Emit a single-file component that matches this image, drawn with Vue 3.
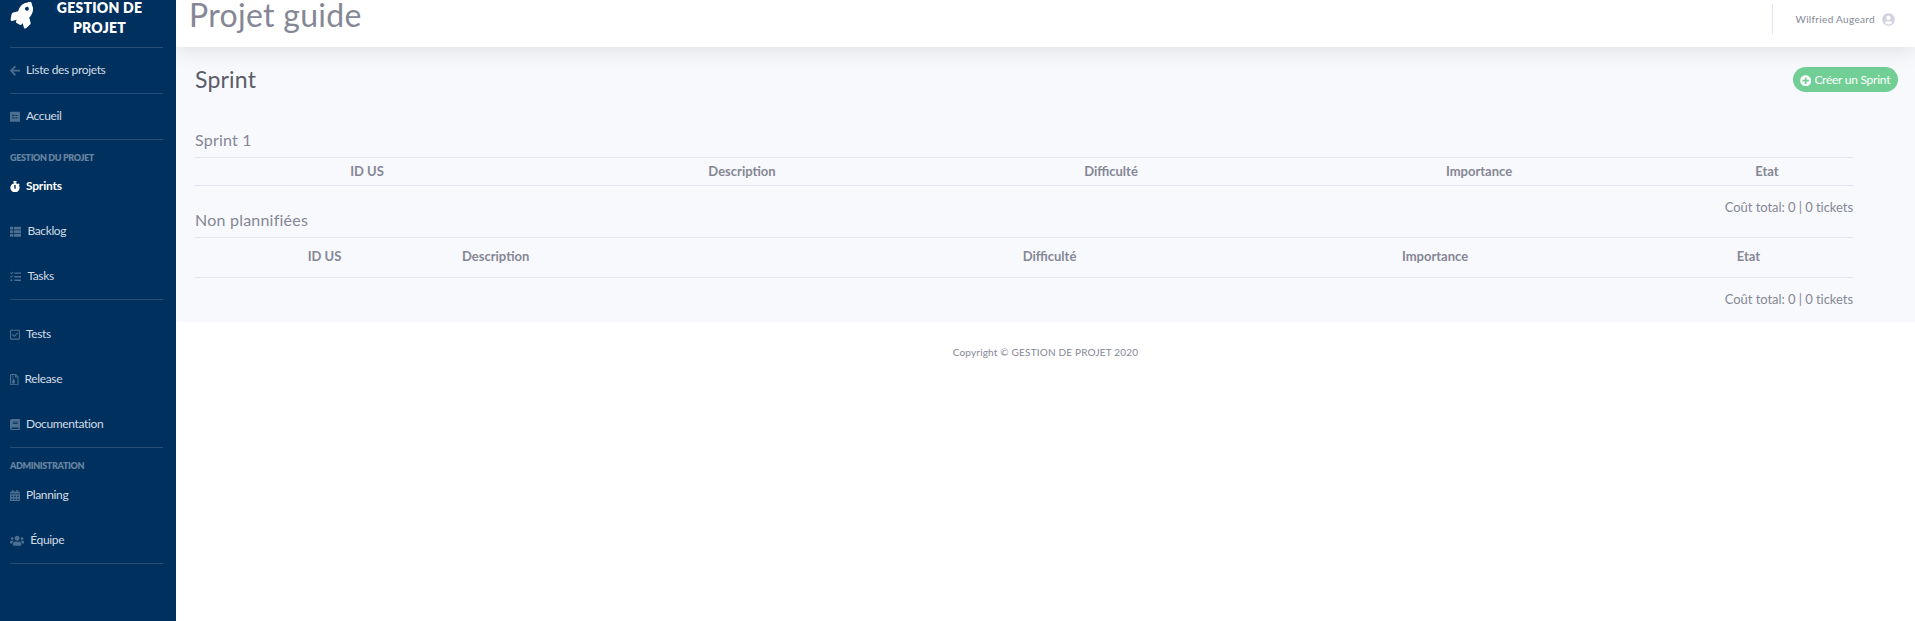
<script setup>
const icons = {
  arrow: { w: 448, d: 'M257.5 445.1l-22.2 22.2c-9.4 9.4-24.6 9.4-33.9 0L7 273c-9.4-9.4-9.4-24.6 0-33.9L201.4 44.7c9.4-9.4 24.6-9.4 33.9 0l22.2 22.2c9.5 9.5 9.3 25-.4 34.3L136.6 216H424c13.3 0 24 10.7 24 24v32c0 13.3-10.7 24-24 24H136.6l120.5 114.8c9.8 9.3 10 24.8.4 34.3z' },
  poll: { w: 448, d: 'M20 32h408a20 20 0 0 1 20 20v408a20 20 0 0 1-20 20H20a20 20 0 0 1-20-20V52a20 20 0 0 1 20-20zM100 170v60h90v-60zm120 20v30h130v-30zM100 282v60h90v-60zm120 10v30h130v-30z' },
  stopwatch: { w: 448, d: 'M432 304c0 114.9-93.100 208-208 208S16 418.900 16 304c0-104 76.300-190.200 176-205.500V64h-28c-6.600 0-12-5.400-12-12V12c0-6.600 5.400-12 12-12h120c6.600 0 12 5.400 12 12v40c0 6.600-5.400 12-12 12h-28v34.500c37.500 5.800 71.700 21.600 99.700 44.600l27.500-27.500c4.700-4.700 12.300-4.700 17 0l28.300 28.300c4.700 4.700 4.700 12.300 0 17l-29.400 29.400C419.600 227.100 432 264.100 432 304zm-176 36V188.500c0-6.600-5.400-12-12-12h-40c-6.600 0-12 5.400-12 12V340c0 6.600 5.400 12 12 12h40c6.600 0 12-5.400 12-12z' },
  list: { w: 512, d: 'M24 32h101a24 24 0 0 1 24 24v80a24 24 0 0 1-24 24H24a24 24 0 0 1-24-24V56a24 24 0 0 1 24-24zM205 32h283a24 24 0 0 1 24 24v80a24 24 0 0 1-24 24H205a24 24 0 0 1-24-24V56a24 24 0 0 1 24-24zM24 192h101a24 24 0 0 1 24 24v80a24 24 0 0 1-24 24H24a24 24 0 0 1-24-24v-80a24 24 0 0 1 24-24zM205 192h283a24 24 0 0 1 24 24v80a24 24 0 0 1-24 24H205a24 24 0 0 1-24-24v-80a24 24 0 0 1 24-24zM24 352h101a24 24 0 0 1 24 24v80a24 24 0 0 1-24 24H24a24 24 0 0 1-24-24v-80a24 24 0 0 1 24-24zM205 352h283a24 24 0 0 1 24 24v80a24 24 0 0 1-24 24H205a24 24 0 0 1-24-24v-80a24 24 0 0 1 24-24z' },
  tasks: { w: 512, d: 'M0 92l28-28 32 30 68-68 28 28-96 98zM0 252l28-28 32 30 68-68 28 28-96 98zM64 368a48 48 0 1 1-.1 96 48 48 0 0 1 .1-96zM208 64h288a16 16 0 0 1 16 16v32a16 16 0 0 1-16 16H208a16 16 0 0 1-16-16V80a16 16 0 0 1 16-16zM208 224h288a16 16 0 0 1 16 16v32a16 16 0 0 1-16 16H208a16 16 0 0 1-16-16v-32a16 16 0 0 1 16-16zM208 384h288a16 16 0 0 1 16 16v32a16 16 0 0 1-16 16H208a16 16 0 0 1-16-16v-32a16 16 0 0 1 16-16z' },
  check: { w: 448, d: 'M400 32H48C21.500 32 0 53.500 0 80v352c0 26.500 21.500 48 48 48h352c26.500 0 48-21.500 48-48V80c0-26.500-21.500-48-48-48zm0 400H48V80h352v352zM364 192L191 364 83 256l34-34 74 74 139-138z' },
  archive: { w: 384, d: 'M48 0h204c12.700 0 24.900 5.100 33.900 14.100L369.900 98c9 9 14.100 21.300 14.100 34v332a48 48 0 0 1-48 48H48a48 48 0 0 1-48-48V48A48 48 0 0 1 48 0zM48 48v416h288V160H248a24 24 0 0 1-24-24V48zM272 52v60h60zM96 48h32v32H96zM128 80h32v32h-32zM96 112h32v32H96zM128 144h32v32h-32zM96 176h32v32H96zM128 208h32v32h40l20 118a64 64 0 1 1-126 0l14-86h20z' },
  book: { w: 448, d: 'M448 360V24c0-13.300-10.700-24-24-24H96C43 0 0 43 0 96v320c0 53 43 96 96 96h328c13.300 0 24-10.700 24-24v-16c0-7.500-3.500-14.300-8.900-18.700-4.200-15.400-4.200-59.300 0-74.700 5.400-4.300 8.900-11.100 8.900-18.600zM128 134c0-3.300 2.700-6 6-6h212c3.300 0 6 2.700 6 6v20c0 3.300-2.700 6-6 6H134c-3.300 0-6-2.700-6-6v-20zm0 64c0-3.300 2.700-6 6-6h212c3.300 0 6 2.700 6 6v20c0 3.300-2.700 6-6 6H134c-3.300 0-6-2.700-6-6v-20zm253.400 250H96c-17.700 0-32-14.300-32-32s14.300-32 32-32h285.400c-1.900 17.100-1.900 46.900 0 64z' },
  calendar: { w: 448, d: 'M0 464a48 48 0 0 0 48 48h352a48 48 0 0 0 48-48V192H0zM0 160v-48a48 48 0 0 1 48-48h48V12a12 12 0 0 1 12-12h40a12 12 0 0 1 12 12v52h128V12a12 12 0 0 1 12-12h40a12 12 0 0 1 12 12v52h48a48 48 0 0 1 48 48v48zM64 256v64h64v-64zm128 0v64h64v-64zm128 0v64h64v-64zM64 384v64h64v-64zm128 0v64h64v-64zm128 0v64h64v-64z' },
  users: { w: 640, d: 'M96 224c35.300 0 64-28.700 64-64s-28.700-64-64-64-64 28.700-64 64 28.700 64 64 64zm448 0c35.300 0 64-28.700 64-64s-28.700-64-64-64-64 28.700-64 64 28.700 64 64 64zm32 32h-64c-17.600 0-33.500 7.100-45.100 18.600 40.300 22.100 68.900 62 75.100 109.400h66c17.700 0 32-14.300 32-32v-32c0-35.300-28.700-64-64-64zm-256 0c61.900 0 112-50.100 112-112S381.900 32 320 32 208 82.100 208 144s50.100 112 112 112zm76.800 32h-8.300c-20.800 10-43.900 16-68.500 16s-47.600-6-68.500-16h-8.300C179.600 288 128 339.600 128 403.200V432c0 26.500 21.500 48 48 48h288c26.500 0 48-21.500 48-48v-28.800c0-63.600-51.600-115.200-115.200-115.200zm-223.700-13.400C161.500 263.100 145.600 256 128 256H64c-35.300 0-64 28.700-64 64v32c0 17.700 14.300 32 32 32h65.900c6.300-47.400 34.900-87.300 75.200-109.400z' },
}

const groups = [
  { items: [{ icon: 'arrow', label: 'Liste des projets' }] },
  { items: [{ icon: 'poll', label: 'Accueil' }] },
  {
    title: 'Gestion du projet',
    items: [
      { icon: 'stopwatch', label: 'Sprints', active: true },
      { icon: 'list', label: 'Backlog' },
      { icon: 'tasks', label: 'Tasks' },
    ],
  },
  {
    spaced: true,
    items: [
      { icon: 'check', label: 'Tests' },
      { icon: 'archive', label: 'Release' },
      { icon: 'book', label: 'Documentation' },
    ],
  },
  {
    title: 'Administration',
    items: [
      { icon: 'calendar', label: 'Planning' },
      { icon: 'users', label: 'Équipe' },
    ],
  },
]

const columns = ['ID US', 'Description', 'Difficulté', 'Importance', 'Etat']
</script>

<template>
  <div class="layout">
    <aside class="sidebar">
      <div class="brand">
        <svg class="rocket" viewBox="0 0 512 512"><path d="M505.120 19.094c-1.189-5.531-6.658-11-12.207-12.188C460.716 0 435.507 0 410.407 0 307.175 0 245.269 55.203 199.052 128H94.838c-16.348.016-35.557 11.875-42.887 26.484L2.516 253.297A28.400 28.400 0 0 0 0 264a24 24 0 0 0 24 24h103.816l-22.475 22.469c-11.365 11.361-12.996 32.258 0 45.250l50.905 50.906c11.156 11.188 32.156 13.156 45.277 0l22.475-22.469V488a24 24 0 0 0 24 24 28.560 28.560 0 0 0 10.707-2.516l98.728-49.390c14.629-7.297 26.508-26.500 26.508-42.860V312.797c72.598-46.313 128.035-108.406 128.035-211.094C512.075 76.500 512.075 51.297 505.120 19.094zM384.040 168a40 40 0 1 1 40-40 40 40 0 0 1-40 40z" /></svg>
        <span class="brand-text">GESTION DE<br />PROJET</span>
      </div>
      <nav>
        <section v-for="(group, i) in groups" :key="i" class="group" :class="{ spaced: group.spaced }">
          <h6 v-if="group.title">{{ group.title }}</h6>
          <a v-for="item in group.items" :key="item.label" class="item" :class="[item.icon, { active: item.active }]">
            <svg :viewBox="`0 0 ${icons[item.icon].w} 512`" :style="{ width: icons[item.icon].w / 512 * 11.4 + 'px' }"><path fill-rule="evenodd" :d="icons[item.icon].d" /></svg>
            <span>{{ item.label }}</span>
          </a>
        </section>
      </nav>
    </aside>

    <div class="main">
      <header class="topbar">
        <h1>Projet guide</h1>
        <div class="user">
          <span>Wilfried Augeard</span>
          <svg viewBox="0 0 496 512"><path d="M248 8C111 8 0 119 0 256s111 248 248 248 248-111 248-248S385 8 248 8zm0 96c48.600 0 88 39.400 88 88s-39.400 88-88 88-88-39.400-88-88 39.400-88 88-88zm0 344c-58.700 0-111.300-26.600-146.500-68.200 18.800-35.400 55.600-59.800 98.500-59.800 2.400 0 4.800.4 7.100 1.100 13 4.200 26.600 6.900 40.900 6.900 14.300 0 28-2.700 40.900-6.900 2.300-.7 4.700-1.100 7.100-1.100 42.900 0 79.700 24.400 98.500 59.800C359.300 421.400 306.700 448 248 448z" /></svg>
        </div>
      </header>

      <main class="content">
        <div class="heading">
          <h2>Sprint</h2>
          <button class="create">
            <svg viewBox="0 0 512 512"><path d="M256 8C119 8 8 119 8 256s111 248 248 248 248-111 248-248S393 8 256 8zm144 276c0 6.600-5.400 12-12 12h-92v92c0 6.600-5.400 12-12 12h-56c-6.600 0-12-5.400-12-12v-92h-92c-6.600 0-12-5.400-12-12v-56c0-6.600 5.400-12 12-12h92v-92c0-6.600 5.400-12 12-12h56c6.600 0 12 5.400 12 12v92h92c6.600 0 12 5.400 12 12v56z" /></svg>
            <span>Créer un Sprint</span>
          </button>
        </div>

        <section class="sprint">
          <h3>Sprint 1</h3>
          <div class="row">
            <b v-for="c in columns" :key="c">{{ c }}</b>
          </div>
          <p>Coût total: 0 | 0 tickets</p>
        </section>

        <section class="sprint unplanned">
          <h3>Non plannifiées</h3>
          <div class="row">
            <b v-for="c in columns" :key="c">{{ c }}</b>
          </div>
          <p>Coût total: 0 | 0 tickets</p>
        </section>
      </main>

      <footer><span>Copyright © GESTION DE PROJET 2020</span></footer>
    </div>
  </div>
</template>

<style>
body {
  margin: 0;
  background: #fff;
  overflow: hidden;
}
</style>

<style scoped>
* {
  box-sizing: border-box;
}
.layout {
  display: flex;
  height: 621px;
  overflow: hidden;
  font-family: Lato, "Open Sans", sans-serif;
  color: #858796;
}
h1, h2, h3, h6, p {
  margin: 0;
  font-weight: 400;
}
svg {
  flex: none;
  display: block;
  fill: currentColor;
}
span, b, h1, h2, h3, h6 {
  white-space: nowrap;
}
.sidebar {
  flex: none;
  width: 176px;
  background: #00305e;
  color: #d3dce4;
}
.brand {
  height: 47px;
  display: flex;
  padding-left: 10px;
  color: #fff;
}
.rocket {
  width: 25px;
  height: 25px;
  margin-top: 4px;
  transform: rotate(-15deg);
}
.brand-text {
  width: 129px;
  text-align: center;
  font-size: 14px;
  line-height: 20px;
  font-weight: 800;
  letter-spacing: 0.25px;
  margin-top: -2px;
}
.group {
  border-top: 1px solid #264f77;
  margin: 0 13px 0 10px;
}
.group:last-child {
  border-bottom: 1px solid #264f77;
}
.spaced {
  padding-top: 12px;
}
h6 {
  height: 24px;
  line-height: 36px;
  font-size: 9px;
  font-weight: 800;
  letter-spacing: -0.37px;
  text-transform: uppercase;
  color: #6683a0;
}
.group:last-child h6 {
  height: 25px;
}
.item {
  display: flex;
  align-items: center;
  height: 45px;
  font-size: 12px;
  letter-spacing: -0.36px;
  gap: 6px;
}
.item span {
  padding-bottom: 2px;
}
.item svg {
  height: 11.4px;
  color: #4d6f90;
}
.item.active {
  color: #fff;
  font-weight: 700;
  letter-spacing: -0.2px;
}
.item.active svg {
  color: #fff;
}
.main {
  flex: 1;
  min-width: 0;
  overflow: hidden;
}
.topbar {
  position: relative;
  height: 47px;
  background: #fff;
  display: flex;
  justify-content: space-between;
  align-items: flex-start;
  padding: 0 20px 0 13px;
  box-shadow: 0 2px 22px rgba(58, 59, 69, 0.15);
}
h1 {
  font-size: 32px;
  line-height: 30px;
  letter-spacing: 0.3px;
}
.user {
  display: flex;
  align-items: center;
  gap: 7px;
  height: 30px;
  margin-top: 4px;
  padding-left: 23px;
  border-left: 1px solid #e3e6f0;
  font-size: 10px;
  letter-spacing: 0.32px;
}
.user span {
  padding-bottom: 1px;
}
.user svg {
  width: 13px;
  height: 13px;
  color: #d1d3e2;
}
.content {
  height: 275px;
  background: #f8f9fc;
  padding: 20px 62px 0 19px;
}
.heading {
  display: flex;
  justify-content: space-between;
  height: 25px;
  margin-right: -45px;
}
h2 {
  font-size: 23px;
  line-height: 24px;
  letter-spacing: 0.2px;
  color: #5a5c69;
}
.create {
  width: 105px;
  height: 25px;
  border: 0;
  border-radius: 13px;
  background: #71cf95;
  color: #fff;
  font: inherit;
  font-size: 12px;
  letter-spacing: -0.26px;
  display: flex;
  align-items: center;
  padding: 0 0 0 7px;
  gap: 3px;
}
.create span {
  padding-bottom: 1px;
}
.create svg {
  width: 11.400px;
  height: 11.400px;
  margin-top: 2px;
}
.sprint {
  padding-top: 38px;
}
h3 {
  font-size: 16px;
  line-height: 20px;
  height: 27px;
  letter-spacing: 0.22px;
}
.row {
  height: 29px;
  border: solid #e3e6f0;
  border-width: 1px 0;
  display: grid;
  grid-template-columns: 344px 406px 332px 404px 172px;
  align-items: center;
  text-align: center;
  font-size: 13px;
}
.row b {
  padding-bottom: 2px;
}
p {
  text-align: right;
  font-size: 13px;
  line-height: 20px;
  letter-spacing: -0.05px;
  margin-top: 11px;
}
.unplanned {
  padding-top: 0;
  margin-top: -7px;
}
.unplanned .row {
  height: 41px;
  grid-template-columns: 259px 419px 353px 418px 209px;
}
.unplanned .row b {
  padding-bottom: 4px;
}
.unplanned .row b:nth-child(2) {
  text-align: left;
  padding-left: 8px;
}
footer {
  text-align: center;
  font-size: 10px;
  line-height: 12px;
  letter-spacing: 0.19px;
  padding-top: 24px;
}
</style>
